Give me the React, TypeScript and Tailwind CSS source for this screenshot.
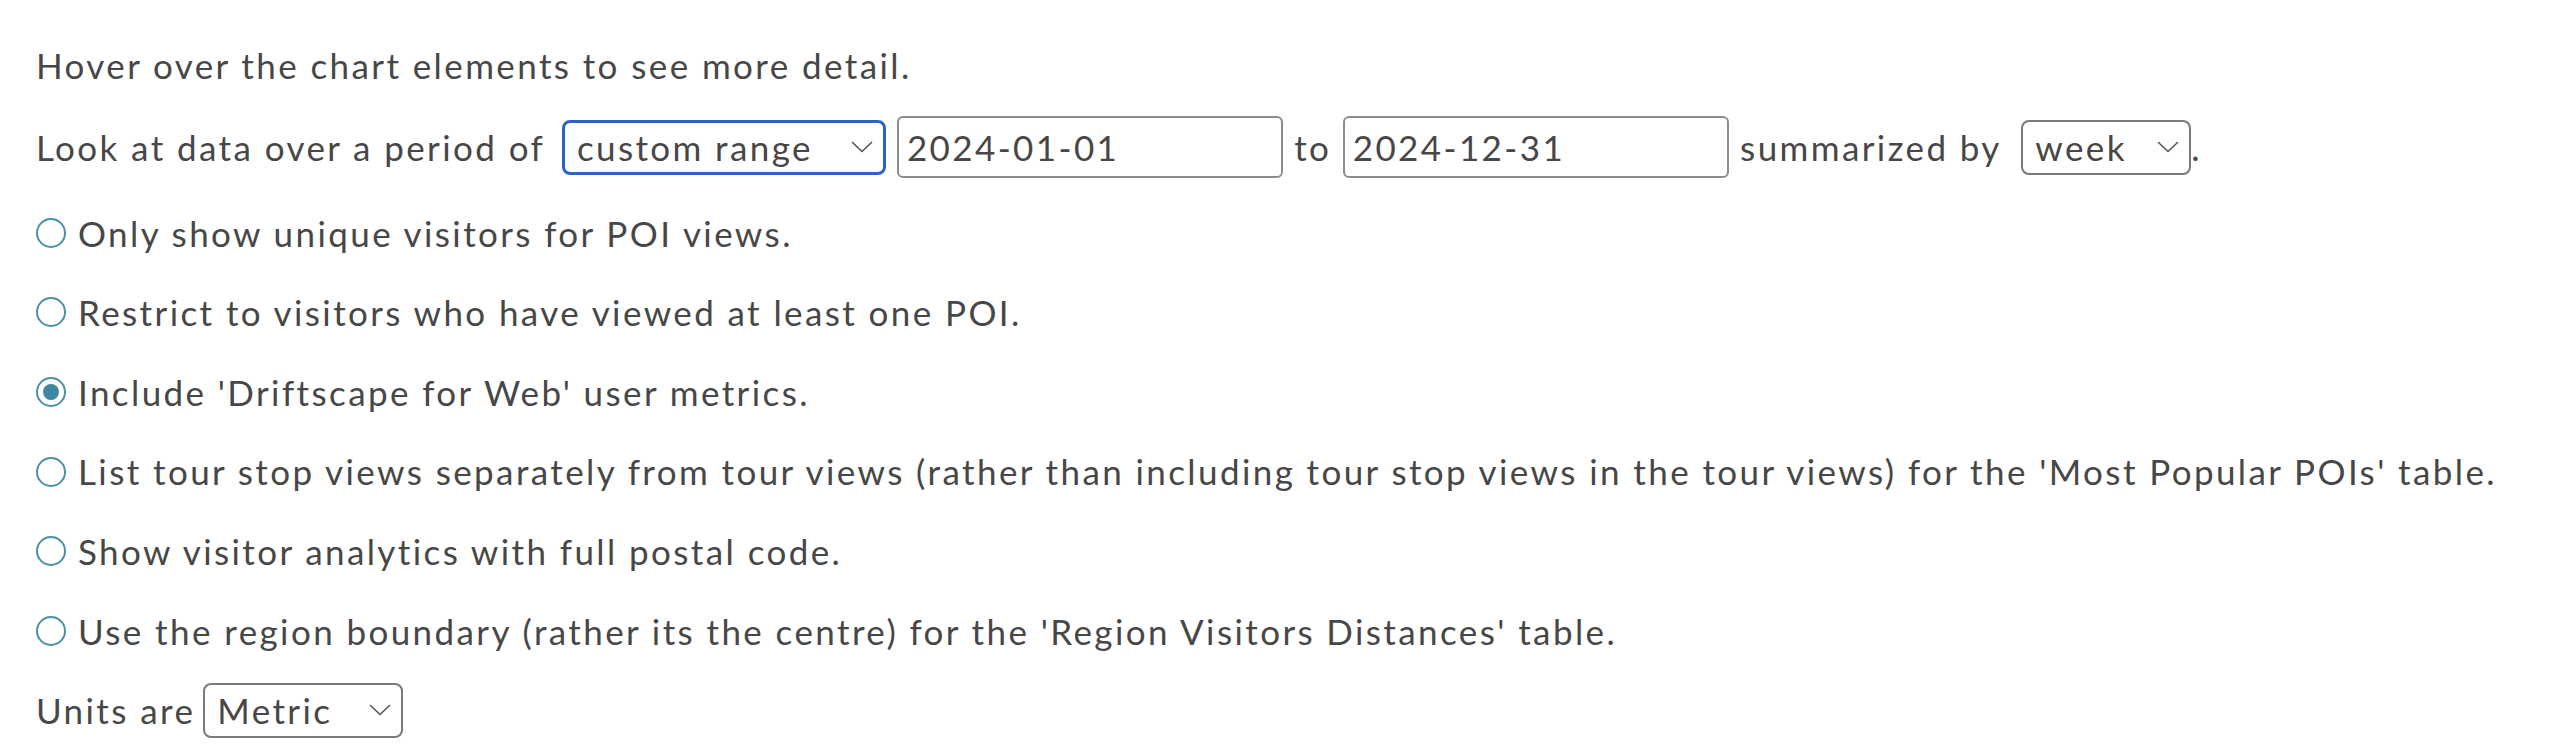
import React, { useState } from 'react';

const Chevron: React.FC = () => (
  <svg width="22" height="12" viewBox="0 0 22 12" fill="none" className="shrink-0">
    <path d="M1.5 1.5 L11 10.5 L20.5 1.5" stroke="#555" strokeWidth="1.6" strokeLinecap="round" strokeLinejoin="round" />
  </svg>
);

const Select: React.FC<{ value: string; width: string; focused?: boolean }> = ({ value, width, focused }) => (
  <div
    className={`flex h-[55px] shrink-0 items-center justify-between rounded-[8px] bg-white pl-[12px] pr-[10px] ${width} ${
      focused ? 'border-[3px] border-[#2b63c9]' : 'border-2 border-[#7a7a7a]'
    }`}
  >
    <span>{value}</span>
    <Chevron />
  </div>
);

const DateInput: React.FC<{ value: string }> = ({ value }) => (
  <div className="flex h-[62px] w-[386px] shrink-0 items-center rounded-[6px] border-2 border-[#8c8c8c] bg-white px-[8px]">
    {value}
  </div>
);

const Radio: React.FC<{ checked: boolean; label: string; onClick: () => void }> = ({ checked, label, onClick }) => (
  <div className="flex h-[79.6px] cursor-pointer items-center gap-[12px]" onClick={onClick}>
    <span className="flex h-[30px] w-[30px] shrink-0 items-center justify-center rounded-full border-2 border-[#4a90a8] bg-white">
      {checked && <span className="h-[16px] w-[16px] rounded-full bg-[#3f88a1]" />}
    </span>
    <span>{label}</span>
  </div>
);

const options = [
  'Only show unique visitors for POI views.',
  'Restrict to visitors who have viewed at least one POI.',
  "Include 'Driftscape for Web' user metrics.",
  "List tour stop views separately from tour views (rather than including tour stop views in the tour views) for the 'Most Popular POIs' table.",
  'Show visitor analytics with full postal code.',
  "Use the region boundary (rather its the centre) for the 'Region Visitors Distances' table.",
];

const App: React.FC = () => {
  const [selected, setSelected] = useState<number[]>([2]);

  const toggle = (i: number) =>
    setSelected(prev => (prev.includes(i) ? prev.filter(x => x !== i) : [...prev, i]));

  return (
    <div className="min-h-screen bg-white pl-[36px] pt-[23px] font-['Lato',sans-serif] text-[35px] tracking-[2.4px] text-[#474747]">
      <div className="flex h-[84px] items-center">Hover over the chart elements to see more detail.</div>

      <div className="flex h-[80px] items-center whitespace-pre">
        <span>Look at data over a period of </span>
        <span className="w-[6px]" />
        <Select value="custom range" width="w-[324px]" focused />
        <span className="w-[11px]" />
        <DateInput value="2024-01-01" />
        <span> to </span>
        <DateInput value="2024-12-31" />
        <span> summarized by </span>
        <span className="w-[9px]" />
        <Select value="week" width="w-[170px]" />
        <span>.</span>
      </div>

      <div className="mt-[6px]">
        {options.map((label, i) => (
          <Radio key={i} label={label} checked={selected.includes(i)} onClick={() => toggle(i)} />
        ))}
        <div className="flex h-[79.6px] items-center whitespace-pre">
          <span>Units are</span>
          <span className="w-[8px]" />
          <Select value="Metric" width="w-[200px]" />
        </div>
      </div>
    </div>
  );
};

export default App;
